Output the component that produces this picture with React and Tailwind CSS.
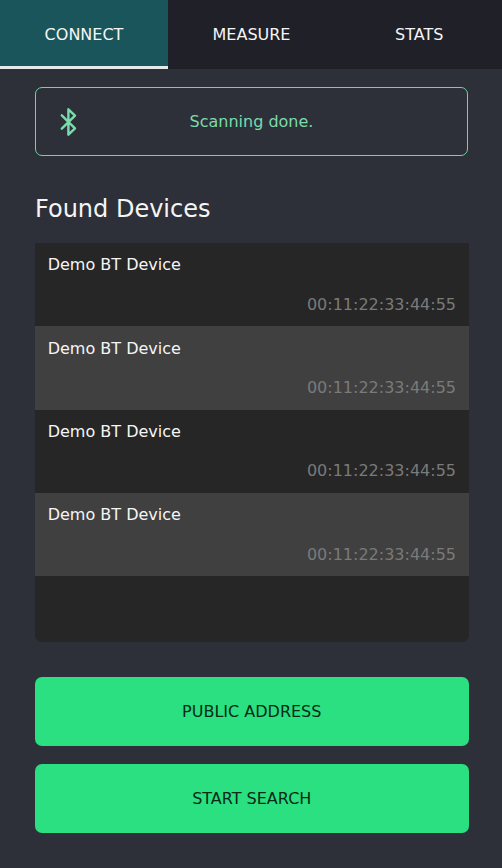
const devices = Array.from({ length: 4 }, () => ({
  name: "Demo BT Device",
  address: "00:11:22:33:44:55",
}));

function Tab({ label, active, className }) {
  return (
    <button
      className={`flex h-[69px] items-center justify-center border-b-[3px] pt-[3px] ${className} ${
        active ? "border-[#e6e9e9] bg-[#1b555c]" : "border-[#202028] bg-[#202028]"
      }`}
    >
      {label}
    </button>
  );
}

function BluetoothIcon() {
  return (
    <svg
      className="h-[30px] w-[18px]"
      viewBox="0 0 18 30"
      fill="none"
      stroke="currentColor"
      strokeWidth="2.4"
      strokeLinecap="round"
      strokeLinejoin="round"
    >
      <path d="M1.8 8.3 15 21.3 8.4 27.7V2.3L15 8.7 1.8 21.7" />
    </svg>
  );
}

function Device({ name, address }) {
  return (
    <li className="flex h-[83.3px] flex-col justify-between pt-[10.5px] pr-[12.5px] pb-[9.5px] pl-[12.7px] leading-6 odd:bg-[#262626] even:bg-[#404040]">
      <span>{name}</span>
      <span className="self-end text-[#7a7a7a]">{address}</span>
    </li>
  );
}

function ActionButton({ children }) {
  return (
    <button className="h-[69.3px] w-full rounded-[7px] bg-[#2be080] pt-px text-[#052a16]">
      {children}
    </button>
  );
}

export default function App() {
  return (
    <div className="flex h-[868px] w-[502px] flex-col overflow-hidden bg-[#2e3039] font-['DejaVu_Sans',sans-serif] text-base text-[#f5f5f5]">
      <nav className="flex">
        <Tab label="CONNECT" active className="w-[168px]" />
        <Tab label="MEASURE" className="w-[167px]" />
        <Tab label="STATS" className="w-[167px] pl-[1.5px]" />
      </nav>
      <main className="flex flex-col pt-[18px] pr-[33.5px] pl-[35px]">
        <div className="grid h-[69.3px] w-[433px] grid-cols-[42px_1fr_42px] items-center rounded-[7px] border border-[#6fd3a3] pl-6 pr-6 text-[#78dcab]">
          <BluetoothIcon />
          <span className="text-center">Scanning done.</span>
        </div>
        <h1 className="mt-[35px] text-2xl leading-9">Found Devices</h1>
        <ul className="mt-[15.7px] h-[399px] overflow-hidden rounded-b-[7px] bg-[#262626]">
          {devices.map((device, index) => (
            <Device key={index} {...device} />
          ))}
        </ul>
        <div className="mt-[35px] flex flex-col gap-[17.5px]">
          <ActionButton>PUBLIC ADDRESS</ActionButton>
          <ActionButton>START SEARCH</ActionButton>
        </div>
      </main>
    </div>
  );
}
